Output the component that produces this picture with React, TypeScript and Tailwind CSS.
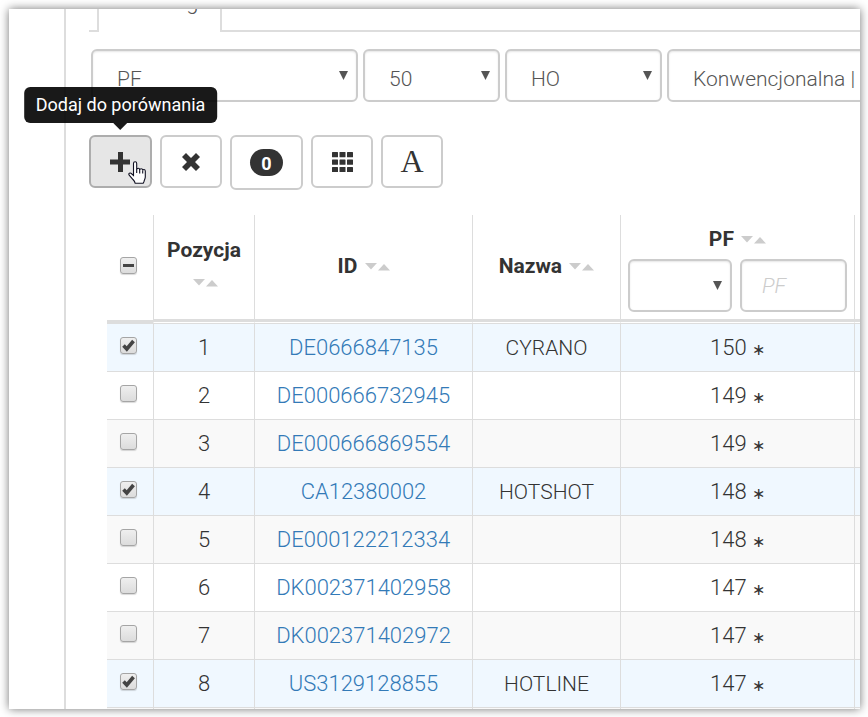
import React, { useEffect, useRef, useState } from 'react';

interface Entry {
  position: number;
  id: string;
  name?: string;
  pf: number;
}

const entries: Entry[] = [
  { position: 1, id: 'DE0666847135', name: 'CYRANO', pf: 150 },
  { position: 2, id: 'DE000666732945', pf: 149 },
  { position: 3, id: 'DE000666869554', pf: 149 },
  { position: 4, id: 'CA12380002', name: 'HOTSHOT', pf: 148 },
  { position: 5, id: 'DE000122212334', pf: 148 },
  { position: 6, id: 'DK002371402958', pf: 147 },
  { position: 7, id: 'DK002371402972', pf: 147 },
  { position: 8, id: 'US3129128855', name: 'HOTLINE', pf: 147 },
];

const fieldClasses =
  'h-[53px] rounded-md border-2 border-[#ccc] bg-white text-[21px] font-light text-[#555] shadow-[inset_0_1px_2px_rgba(0,0,0,0.1)] outline-none';

interface DropdownProps {
  label: string;
  options: string[];
  className: string;
}

const Dropdown: React.FC<DropdownProps> = ({ label, options, className }) => (
  <div className={`relative shrink-0 ${className}`}>
    <select aria-label={label} className={`${fieldClasses} w-full appearance-none pt-1.5 pl-6`}>
      {options.map((option) => (
        <option key={option}>{option}</option>
      ))}
    </select>
    <svg viewBox="0 0 9 9" className="pointer-events-none absolute top-[22px] right-[10px] h-[9px] w-[9px]">
      <path d="M0 0h9L4.500 9z" fill="#555" />
    </svg>
  </div>
);

interface CheckboxProps {
  label: string;
  checked: boolean;
  indeterminate?: boolean;
  onChange: () => void;
}

const Checkbox: React.FC<CheckboxProps> = ({ label, checked, indeterminate = false, onChange }) => {
  const ref = useRef<HTMLInputElement>(null);

  useEffect(() => {
    if (ref.current) ref.current.indeterminate = indeterminate;
  }, [indeterminate]);

  return (
    <span className="relative inline-block h-[17px] w-[17px] align-middle">
      <input
        ref={ref}
        type="checkbox"
        aria-label={label}
        checked={checked}
        onChange={onChange}
        className="block h-full w-full appearance-none rounded-[3px] border border-[#a5a5a5] bg-linear-to-b from-[#efefef] to-[#dcdcdc] shadow-[0_1px_1px_rgba(0,0,0,0.15)]"
      />
      <svg viewBox="0 0 17 17" className="pointer-events-none absolute inset-0 h-full w-full" fill="none" stroke="#444">
        {indeterminate && <path d="M3 8.500h11" strokeWidth="3" />}
        {!indeterminate && checked && <path d="M3.500 8.500l3.300 3.500L13.500 4" strokeWidth="3.600" />}
      </svg>
    </span>
  );
};

const SortIcon = () => (
  <svg viewBox="0 0 25 8" className="ml-0.5 inline-block h-2 w-[25px]" fill="#ccc">
    <path d="M0 0h12L6 6.500z" />
    <path d="M13 7.500h12L19 1z" />
  </svg>
);

const buttonClasses = 'flex h-[53px] w-[62px] items-center justify-center rounded-md border-2 border-[#ccc] bg-white text-[#333]';
const headClasses = 'border-b border-l border-b-white border-l-[#ddd] p-0 text-[21px] font-bold shadow-[inset_0_-3px_0_#ddd]';
const cellClasses = 'border-t border-l border-[#ddd] p-0';

const Toolbar = () => (
  <div className="mt-[33px] ml-[23px] flex items-start gap-2">
    <div className="relative">
      <button
        aria-label="Dodaj do porównania"
        className="flex h-[53px] w-[63px] items-center justify-center rounded-md border-2 border-[#adadad] bg-[#e6e6e6] pr-0.5 text-[#333]"
      >
        <svg viewBox="0 0 20 20" className="h-5 w-5" fill="currentColor">
          <path d="M8 0h5v7.500h7v5h-7V20H8v-7.500H0v-5h8z" />
        </svg>
      </button>
      <div
        role="tooltip"
        className="absolute bottom-full left-1/2 mb-3 flex h-9 -translate-x-1/2 items-center rounded-md bg-black/90 px-3 text-lg whitespace-nowrap text-white"
      >
        Dodaj do porównania
        <svg viewBox="0 0 14 7" className="absolute top-full left-1/2 h-[7px] w-[14px] -translate-x-1/2">
          <path d="M0 0h14L7 7z" fillOpacity="0.9" />
        </svg>
      </div>
      {/* Pointer hand */}
      <svg viewBox="0 0 18 24" className="pointer-events-none absolute top-[26px] left-[39px] h-6 w-[18px]">
        <path
          d="M5.500 14.500V2.500q0-1.700 1.600-1.700t1.600 1.700v6q0-1.200 1.500-1.200t1.500 1.700q0-1.300 1.500-1.300t1.500 1.800q.2-1 1.300-1t1.300 1.500V16c0 2-1.300 3.200-1.300 4.700l-.8 1.600H7.200q-.4-2-2.200-3.800L1.200 14.200q-.9-1.400.2-2t2.500.8z"
          fill="#fff"
          stroke="#112"
          strokeWidth="1.100"
        />
        <path d="M8.700 8v4M11.700 9v3.500M14.700 9.500v3" stroke="#112" strokeWidth="1.100" />
      </svg>
    </div>
    <button aria-label="Usuń z porównania" className={buttonClasses}>
      <svg viewBox="0 0 18 18" className="h-[18px] w-[18px]" fill="currentColor">
        <path d="M4 0l5 5 5-5 4 4-5 5 5 5-4 4-5-5-5 5-4-4 5-5-5-5z" />
      </svg>
    </button>
    <button className="flex h-[55px] w-[73px] items-center justify-center rounded-md border-2 border-[#ccc] bg-white">
      <span className="flex h-[27px] w-[33px] items-center justify-center rounded-full bg-[#333] pt-0.5 text-lg font-bold text-white">0</span>
    </button>
    <button aria-label="Kolumny" className={buttonClasses}>
      <svg viewBox="0 0 21 20" className="h-5 w-[21px]" fill="currentColor">
        {[0, 7.5, 15].map((x) =>
          [0, 7.5, 15].map((y) => <rect key={`${x}-${y}`} x={x} y={y} width="6" height="5.200" rx="0.500" />)
        )}
      </svg>
    </button>
    <button className={`${buttonClasses} pb-0.5 font-['Liberation_Serif',serif] text-[32px]`}>A</button>
  </div>
);

const App: React.FC = () => {
  const [selected, setSelected] = useState<number[]>([1, 4, 8]);

  const toggle = (position: number) =>
    setSelected((current) =>
      current.includes(position) ? current.filter((p) => p !== position) : [...current, position]
    );

  const allSelected = selected.length === entries.length;

  return (
    <div className="h-screen bg-white pt-[9px] pr-2 pb-2 pl-[9px] font-[Roboto,sans-serif] text-[22px] leading-8 text-[#333]">
      <div className="h-full shadow-[0_0_9px_rgba(0,0,0,0.55)]">
        <div className="flex h-full overflow-hidden bg-white">
          <aside className="w-[55px] shrink-0" />
          <main className="min-w-0 flex-1 border-l-2 border-[#ddd]">
            {/* Tabs */}
            <div className="ml-[23px] flex h-[23px] items-end">
              <div className="w-2 border-b-2 border-[#ddd]" />
              <div className="flex h-[23px] w-[125px] items-end justify-center border-x-2 border-[#ddd]">
                <a href="#ranking" className="mb-[14px] font-light text-[#555]">Ranking</a>
              </div>
              <div className="flex-1 border-b-2 border-[#ddd]" />
            </div>

            {/* Filters */}
            <div className="mt-[17px] ml-[25px] flex gap-[5px]">
              <Dropdown label="Indeks" options={['PF']} className="w-[267px]" />
              <Dropdown label="Liczba" options={['50']} className="w-[137px]" />
              <Dropdown label="Rasa" options={['HO']} className="w-[157px]" />
              <Dropdown label="Wycena" options={['Konwencjonalna |']} className="w-[267px]" />
            </div>

            <Toolbar />

            <table className="mt-[25px] ml-[41px] w-[calc(100%-41px)] table-fixed border-separate border-spacing-0 text-center">
              <colgroup>
                <col className="w-[46px]" />
                <col className="w-[101px]" />
                <col className="w-[218px]" />
                <col className="w-[148px]" />
                <col className="w-[234px]" />
                <col />
              </colgroup>
              <thead>
                <tr className="h-[108px]">
                  <th className="border-b-[3px] border-[#ddd] p-0 pr-1 pb-1.5">
                    <Checkbox
                      label="Zaznacz wszystkie"
                      checked={allSelected}
                      indeterminate={selected.length > 0 && !allSelected}
                      onChange={() => setSelected(allSelected ? [] : entries.map((e) => e.position))}
                    />
                  </th>
                  <th className={`${headClasses} pb-1.5`}>
                    Pozycja
                    <br />
                    <SortIcon />
                  </th>
                  <th className={`${headClasses} pb-1.5`}>
                    ID <SortIcon />
                  </th>
                  <th className={`${headClasses} pb-1.5`}>
                    Nazwa <SortIcon />
                  </th>
                  <th className={`${headClasses} pb-0.5`}>
                    PF <SortIcon />
                    <div className="mt-1 flex gap-2 px-[7px]">
                      <Dropdown label="Warunek" options={['']} className="w-[104px]" />
                      <input
                        aria-label="PF"
                        placeholder="PF"
                        className={`${fieldClasses} w-[107px] pl-5 placeholder:text-[#ccc] placeholder:italic`}
                      />
                    </div>
                  </th>
                  <th className={headClasses} />
                </tr>
              </thead>
              <tbody className="font-light">
                {entries.map((entry) => {
                  const checked = selected.includes(entry.position);
                  return (
                    <tr key={entry.id} className={`h-12 ${checked ? 'bg-[#f0f8ff]' : 'odd:bg-[#f9f9f9]'}`}>
                      <td className="border-t border-[#ddd] p-0 pr-1 pb-1.5 leading-5">
                        <Checkbox label={`Zaznacz ${entry.id}`} checked={checked} onChange={() => toggle(entry.position)} />
                      </td>
                      <td className={cellClasses}>{entry.position}</td>
                      <td className={cellClasses}>
                        <a href={`#${entry.id}`} className="text-[#337ab7]">{entry.id}</a>
                      </td>
                      <td className={`${cellClasses} text-[21px]`}>{entry.name}</td>
                      <td className={cellClasses}>
                        {entry.pf} <span className="text-base">∗</span>
                      </td>
                      <td className={cellClasses} />
                    </tr>
                  );
                })}
                <tr className="h-12 bg-[#f9f9f9]">
                  <td className="border-t border-[#ddd]" />
                  <td className={cellClasses} />
                  <td className={cellClasses} />
                  <td className={cellClasses} />
                  <td className={cellClasses} />
                  <td className={cellClasses} />
                </tr>
              </tbody>
            </table>
          </main>
        </div>
      </div>
    </div>
  );
};

export default App;
